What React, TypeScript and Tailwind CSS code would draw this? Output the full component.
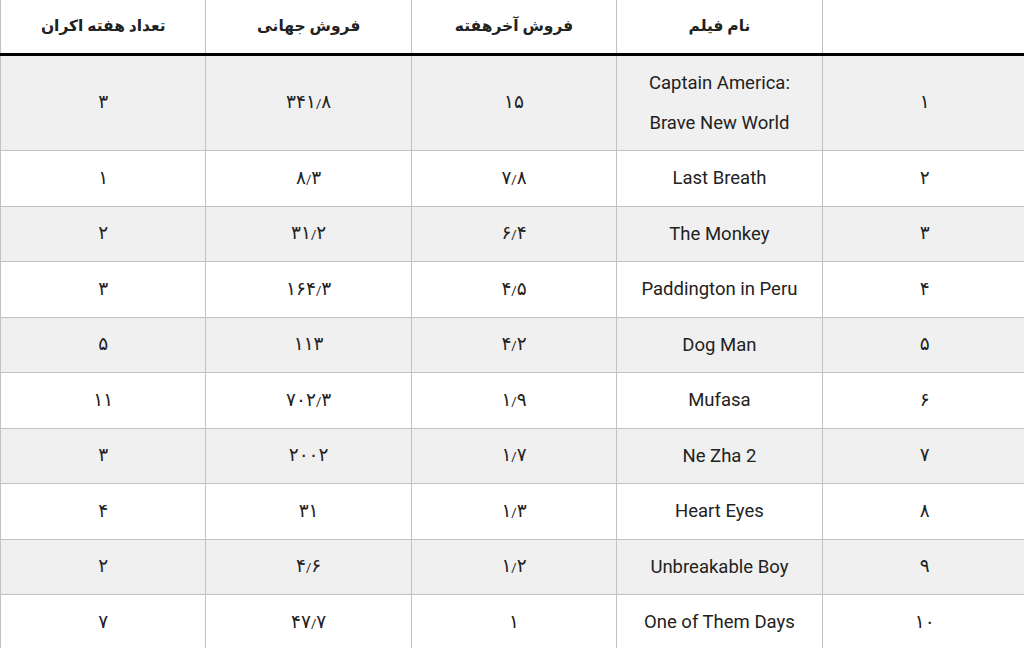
import React from 'react';

const rows = [
  { n: "۱", title: "Captain America: Brave New World", weekend: "۱۵", world: "۳۴۱/۸", weeks: "۳" },
  { n: "۲", title: "Last Breath", weekend: "۷/۸", world: "۸/۳", weeks: "۱" },
  { n: "۳", title: "The Monkey", weekend: "۶/۴", world: "۳۱/۲", weeks: "۲" },
  { n: "۴", title: "Paddington in Peru", weekend: "۴/۵", world: "۱۶۴/۳", weeks: "۳" },
  { n: "۵", title: "Dog Man", weekend: "۴/۲", world: "۱۱۳", weeks: "۵" },
  { n: "۶", title: "Mufasa", weekend: "۱/۹", world: "۷۰۲/۳", weeks: "۱۱" },
  { n: "۷", title: "Ne Zha 2", weekend: "۱/۷", world: "۲۰۰۲", weeks: "۳" },
  { n: "۸", title: "Heart Eyes", weekend: "۱/۳", world: "۳۱", weeks: "۴" },
  { n: "۹", title: "Unbreakable Boy", weekend: "۱/۲", world: "۴/۶", weeks: "۲" },
  { n: "۱۰", title: "One of Them Days", weekend: "۱", world: "۴۷/۷", weeks: "۷" },
];

const headers = ["", "نام فیلم", "فروش آخرهفته", "فروش جهانی", "تعداد هفته اکران"];

// persian decimal: render the slash a bit smaller like the reference font
function Num({ v }: { v: string }) {
  const parts = v.split("/");
  if (parts.length === 1) return <>{v}</>;
  return (
    <span dir="ltr">
      {parts[0]}
      <span className="text-[13px]">/</span>
      {parts[1]}
    </span>
  );
}

const numCell = "px-3 py-0 leading-none text-[18.5px] text-center align-middle border border-[#c2c2c2]";
const titleCell = "px-3 py-[7px] leading-[40px] text-[18.5px] text-center align-middle border border-[#c2c2c2]";

export default function App() {
  return (
    <div className="w-[1024px] h-[648px] overflow-hidden bg-white text-[#222] font-['Roboto','DejaVu_Sans',sans-serif]">
      <table dir="rtl" className="w-[1028px] table-fixed border-collapse">
        <thead>
          <tr>
            {headers.map((h, i) => (
              <th
                key={i}
                className="h-[54px] border-x border-[#c2c2c2] border-b-[3px] border-b-black text-[15.5px] font-bold text-center align-middle"
              >
                {h}
              </th>
            ))}
          </tr>
        </thead>
        <tbody>
          {rows.map((r, i) => (
            <tr
              key={r.n}
              className={(i % 2 === 0 ? "bg-[#f0f0f0] " : "bg-white ") + (i % 2 === 1 ? "h-[56px]" : "h-[55px]")}
            >
              <td className={numCell}>{r.n}</td>
              <td className={titleCell}>{r.title}</td>
              <td className={numCell}><Num v={r.weekend} /></td>
              <td className={numCell}><Num v={r.world} /></td>
              <td className={numCell}>{r.weeks}</td>
            </tr>
          ))}
        </tbody>
      </table>
    </div>
  );
}
